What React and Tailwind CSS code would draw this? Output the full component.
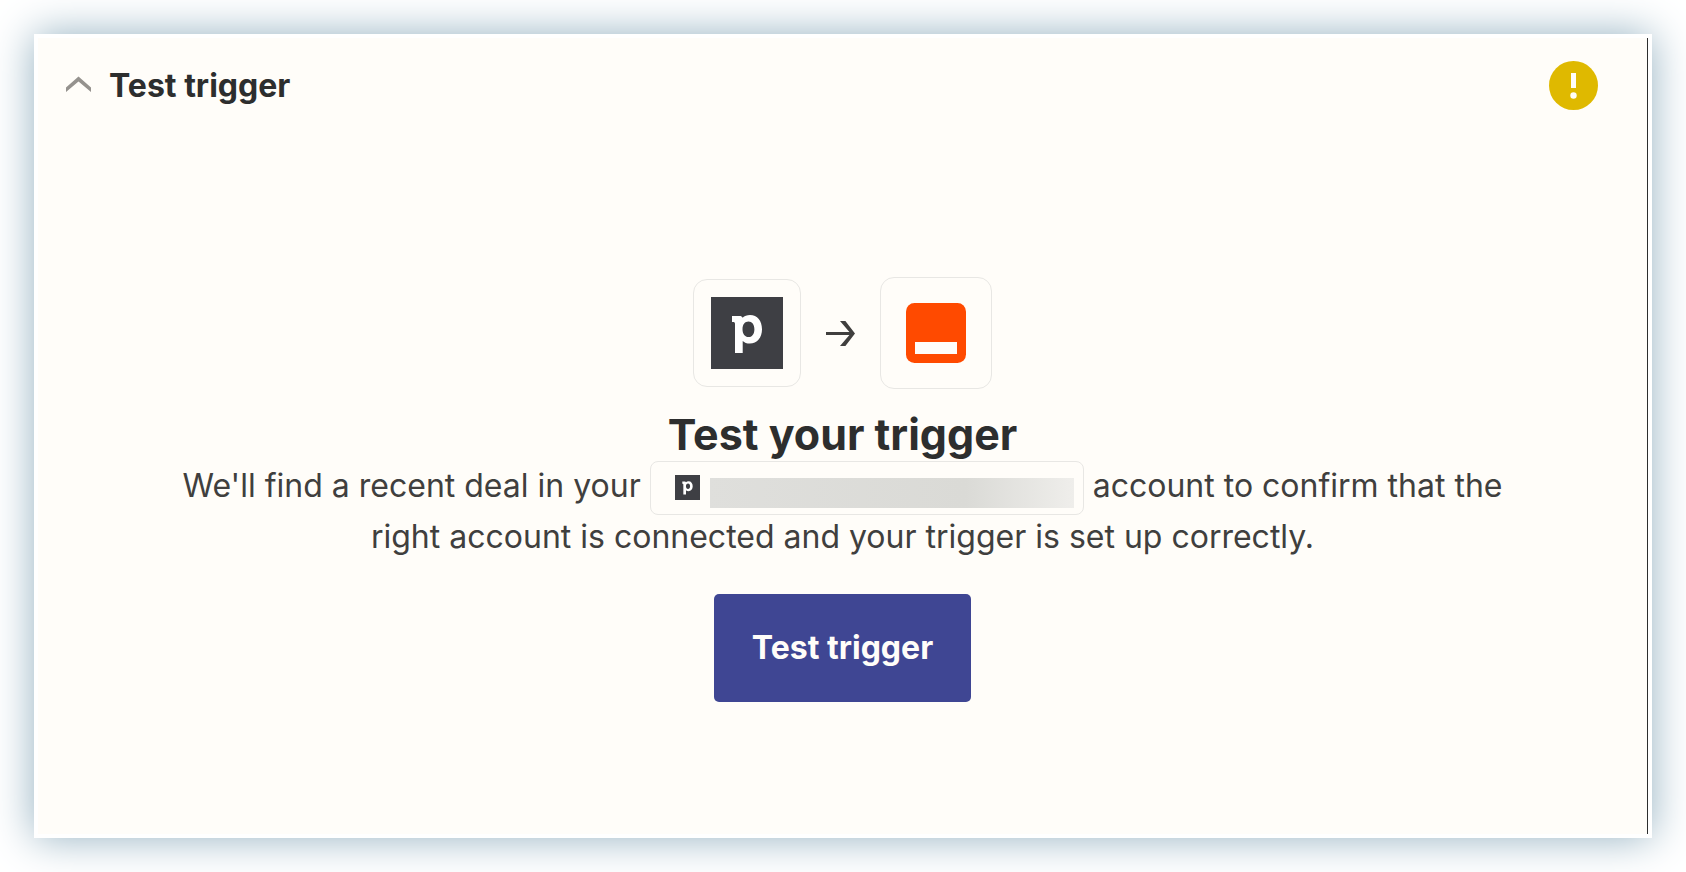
import React from 'react';

/**
 * Pipedrive logo
 * White "p" mark on a dark square, used in the tile and in the account pill
 */
const PipedriveLogo = ({ className }) => (
  <svg viewBox="0 0 72 72" className={className} role="img" aria-label="Pipedrive">
    <rect width="72" height="72" fill="#3e3f44" />
    <path
      fill="#fff"
      fillRule="evenodd"
      d="M21 19h7.5c1.6 0 2.7.6 3.1 1.8C33.400 19 36 18 39 18c7.400 0 12 6 12 14.200S46.200 46.500 38.800 46.500c-3 0-5.400-1-7.100-2.600V56H24V27c0-1.300-.6-1.900-1.900-1.900H21zM37.500 24.600c-3.400 0-6 2.700-6 7.700 0 4.700 2.500 7.800 6 7.800 3.300 0 5.900-2.800 5.900-7.900 0-4.700-2.400-7.600-5.900-7.600z"
    />
  </svg>
);

/**
 * Zapier logo
 * Orange rounded square with the underscore bar
 */
const ZapierLogo = ({ className }) => (
  <svg viewBox="0 0 60 60" className={className} role="img" aria-label="Zapier">
    <rect width="60" height="60" rx="8.500" fill="#ff4a00" />
    <rect x="9" y="39" width="42" height="12" fill="#fffdf9" />
  </svg>
);

const ArrowRight = () => (
  <svg viewBox="0 0 29 26" className="w-[29px] h-[26px]" fill="#403f3e" aria-hidden="true">
    <path d="M0 12h23.400L14 1h5.400L29 13.500 19.400 26H14l9.400-11H0z" />
  </svg>
);

const ChevronUp = () => (
  <svg viewBox="0 0 25 20" className="w-[25px] h-5" fill="#95928e" aria-hidden="true">
    <path d="M12.500 0.500 25 11.500v4.500L12.500 5.500 0 16v-4.500z" />
  </svg>
);

const WarningBadge = () => (
  <svg viewBox="0 0 49 49" className="w-[49px] h-[49px]" role="img" aria-label="Needs attention">
    <circle cx="24.500" cy="24.500" r="24.500" fill="#dfb900" />
    <rect x="22" y="12" width="5" height="15" fill="#fffdf9" />
    <circle cx="24.500" cy="34.500" r="3.200" fill="#fffdf9" />
  </svg>
);

/**
 * Account Pill
 * Connected account with its name hidden
 */
const AccountPill = () => (
  <span className="inline-flex items-center align-middle -my-2 w-[434px] h-[54px] pl-6 pr-[9px] border border-[#e8e7e4] rounded-lg">
    <PipedriveLogo className="w-[25px] h-[25px] shrink-0" />
    <span className="ml-[10px] mt-[10px] flex-1 h-[30px] bg-linear-to-r from-[#dfdfdc] via-[#dadad6] via-70% to-[#efeeeb]" />
  </span>
);

const App = () => {
  return (
    <div className="min-h-screen flex bg-white p-[34px] font-['Inter',sans-serif]">
      <section className="flex-1 flex border-4 border-white bg-[#fffdf9] shadow-[0_0_40px_#93b0c0]">
        <div className="flex-1 flex flex-col border-r border-[#2d2e2e]">
          {/* Header */}
          <header className="flex items-center justify-between pt-[23px] pb-[34px] pl-7 pr-[49px]">
            <button type="button" aria-expanded="true" className="flex items-center gap-[18px]">
              <ChevronUp />
              <span className="text-[32px] leading-[48px] font-bold text-[#2d2e2e]">Test trigger</span>
            </button>
            <WarningBadge />
          </header>

          {/* Body */}
          <div className="flex-1 flex flex-col items-center justify-center px-16 text-center">
            <div className="flex items-center gap-[25px]">
              <div className="p-[17px] border border-[#e8e7e4] rounded-[14px]">
                <PipedriveLogo className="w-[72px] h-[72px]" />
              </div>
              <ArrowRight />
              <div className="p-[25px] border border-[#e8e7e4] rounded-[14px]">
                <ZapierLogo className="w-[60px] h-[60px]" />
              </div>
            </div>

            <h2 className="mt-5 text-[43px] leading-[51px] font-bold text-[#2d2e2e]">Test your trigger</h2>
            <p className="max-w-[1380px] text-[32px] leading-[51px] text-[#403f3e]">
              We'll find a recent deal in your <AccountPill /> <span>account to confirm that the</span>{' '}
              <span>right account is connected and your trigger is set up correctly.</span>
            </p>

            <button
              type="button"
              className="mt-8 h-[108px] px-[38px] rounded-[5px] bg-[#3f4693] text-[32px] font-bold text-[#fffdf9]"
            >
              Test trigger
            </button>
          </div>
        </div>
      </section>
    </div>
  );
};

export default App;
